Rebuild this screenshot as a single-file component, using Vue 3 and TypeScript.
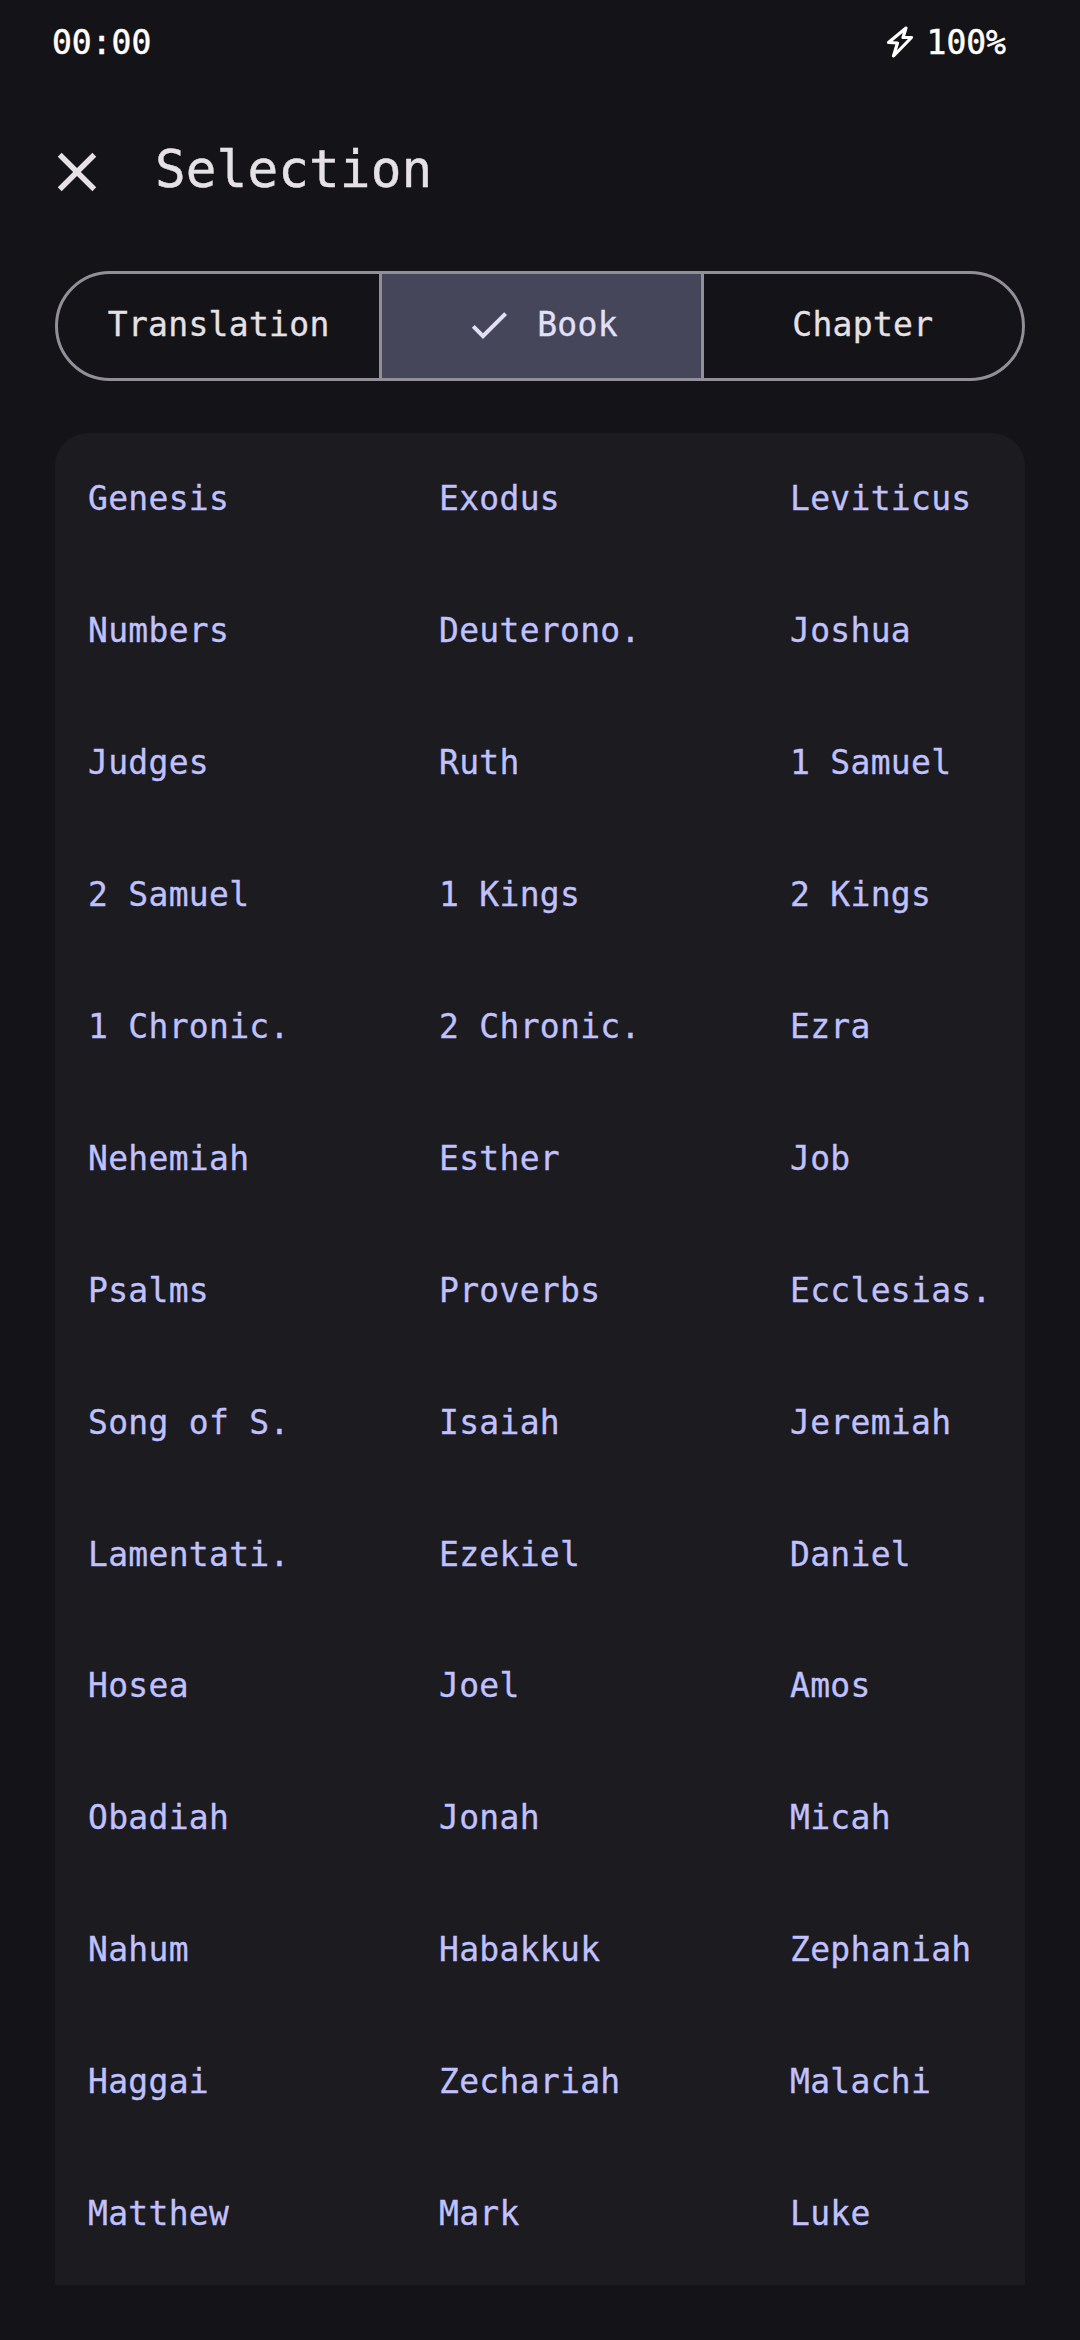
<template>
  <div class="screen">
    <div class="status-bar">
      <span class="status-time">00:00</span>
      <div class="status-battery">
        <svg class="bolt-icon" viewBox="0 0 28 34" fill="none">
          <path d="M20 3 L2.5 17.5 L11.5 18 L7.5 31 L25.5 12.5 L17 12.5 Z" stroke="#fff" stroke-width="3.2" stroke-linejoin="round" />
        </svg>
        <span>100%</span>
      </div>
    </div>

    <header class="top-bar">
      <svg class="close-icon" viewBox="0 0 24 24">
        <path d="M19 6.41L17.59 5 12 10.59 6.41 5 5 6.41 10.59 12 5 17.59 6.41 19 12 13.41 17.59 19 19 17.59 13.41 12z" fill="#e6e1e5" />
      </svg>
      <h1 class="title">Selection</h1>
    </header>

    <div class="segments">
      <button
        v-for="tab in tabs"
        :key="tab"
        class="segment"
        :class="{ active: tab === activeTab }"
      >
        <svg v-if="tab === activeTab" class="check-icon" viewBox="0 0 24 24">
          <path d="M9 16.17L4.83 12l-1.41 1.41L9 19 21 7l-1.41-1.41z" fill="#e2e0f9" />
        </svg>
        {{ tab }}
      </button>
    </div>

    <div class="book-card">
      <div v-for="book in books" :key="book" class="book">{{ book }}</div>
    </div>
  </div>
</template>

<script setup lang="ts">
const tabs = ['Translation', 'Book', 'Chapter']
const activeTab = 'Book'

const books = [
  'Genesis', 'Exodus', 'Leviticus',
  'Numbers', 'Deuterono.', 'Joshua',
  'Judges', 'Ruth', '1 Samuel',
  '2 Samuel', '1 Kings', '2 Kings',
  '1 Chronic.', '2 Chronic.', 'Ezra',
  'Nehemiah', 'Esther', 'Job',
  'Psalms', 'Proverbs', 'Ecclesias.',
  'Song of S.', 'Isaiah', 'Jeremiah',
  'Lamentati.', 'Ezekiel', 'Daniel',
  'Hosea', 'Joel', 'Amos',
  'Obadiah', 'Jonah', 'Micah',
  'Nahum', 'Habakkuk', 'Zephaniah',
  'Haggai', 'Zechariah', 'Malachi',
  'Matthew', 'Mark', 'Luke',
]
</script>

<style>
html,
body {
  margin: 0;
  background: #141318;
}
</style>

<style scoped>
.screen {
  width: 1080px;
  height: 2340px;
  overflow: hidden;
  background: #141318;
  font-family: "DejaVu Sans Mono", "Liberation Mono", monospace;
  display: flex;
  flex-direction: column;
}

.status-bar {
  height: 84px;
  padding: 0 74px 0 52px;
  display: flex;
  align-items: center;
  justify-content: space-between;
  color: #fff;
  font-size: 33px;
  font-weight: 500;
  -webkit-text-stroke: 0.5px #fff;
}

.status-battery {
  display: flex;
  align-items: center;
  gap: 13px;
}

.bolt-icon {
  width: 28px;
  height: 34px;
}

.top-bar {
  height: 176px;
  display: flex;
  align-items: center;
  padding-left: 44px;
  gap: 45px;
}

.close-icon {
  width: 66px;
  height: 66px;
}

.title {
  margin: 0 0 6px;
  font-size: 51px;
  letter-spacing: 0.1px;
  font-weight: 400;
  color: #e6e1e5;
  -webkit-text-stroke: 0.4px #e6e1e5;
}

.segments {
  margin: 11px 55px 0;
  height: 110px;
  box-sizing: border-box;
  border: 3px solid #938f99;
  border-radius: 55px;
  overflow: hidden;
  display: grid;
  grid-template-columns: 1fr 1fr 1fr;
}

.segment {
  border: none;
  background: none;
  padding: 0 0 3px;
  font: inherit;
  font-size: 33px;
  letter-spacing: 0.3px;
  color: #e6e1e5;
  display: flex;
  align-items: center;
  justify-content: center;
  gap: 24px;
  -webkit-text-stroke: 0.3px currentColor;
}

.segment + .segment {
  border-left: 3px solid #938f99;
}

.segment.active {
  background: #46465a;
  color: #e2e0f9;
}

.check-icon {
  width: 48px;
  height: 48px;
}

.book-card {
  margin: 52px 55px 0;
  height: 1852px;
  box-sizing: border-box;
  padding-left: 33px;
  background: #1c1b20;
  border-radius: 33px 33px 0 0;
  display: grid;
  grid-template-columns: 351px 351px 1fr;
  grid-auto-rows: 131.9px;
  align-items: center;
}

.book {
  font-size: 33px;
  letter-spacing: 0.3px;
  color: #c0c1ff;
  white-space: nowrap;
  -webkit-text-stroke: 0.3px #c0c1ff;
}
</style>
